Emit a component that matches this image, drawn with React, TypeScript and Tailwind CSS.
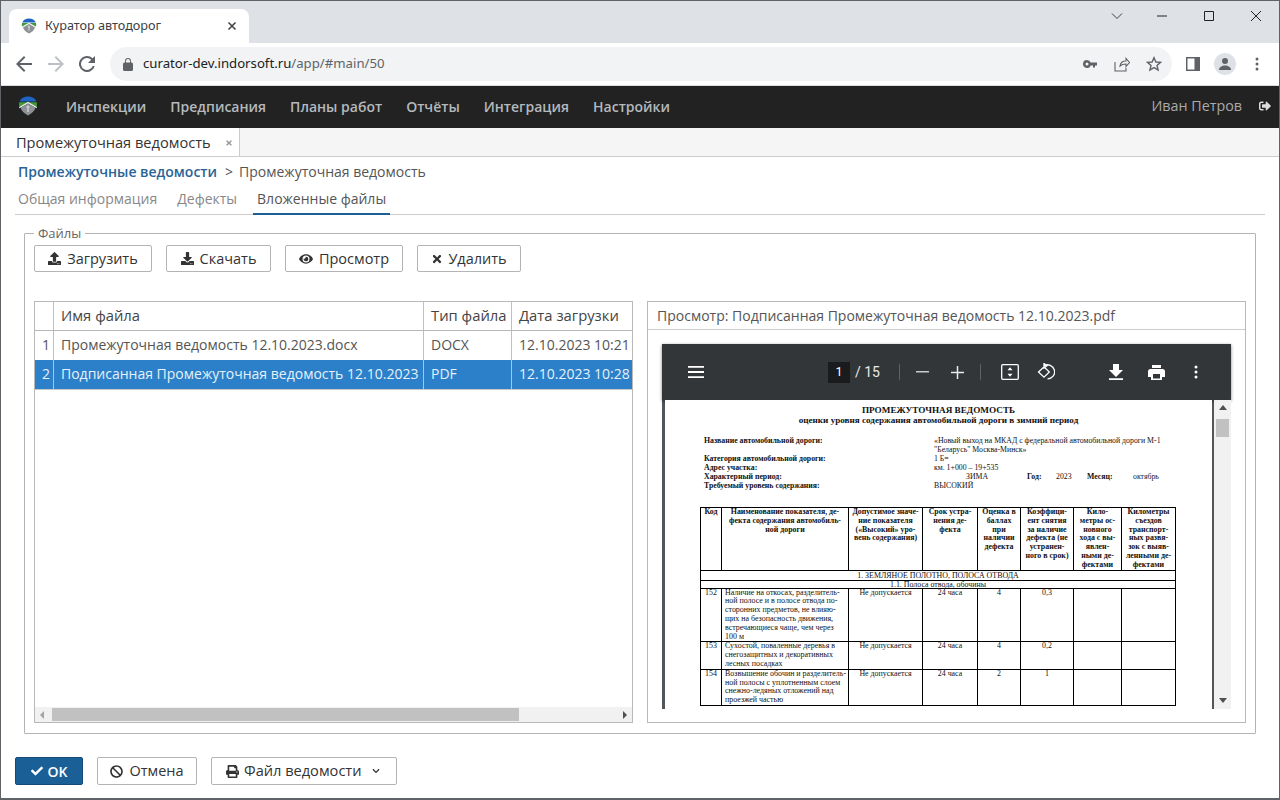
import { FaBan, FaCheck, FaChevronDown, FaDownload, FaEye, FaPrint, FaSignOutAlt, FaTimes, FaUpload } from "react-icons/fa";

function Logo({ size = 20 }: { size?: number }) {
  return (
    <svg width={size} height={size} viewBox="0 0 20 20">
      <path d="M1.500 5.500C3 2 6 .5 10 .5s7 1.500 8.500 5z" fill="#1f63c4" />
      <path d="M1.200 6.300h17.600c.4 1.500.3 3-.2 4.500L10 6.300 1.400 10.800c-.5-1.500-.6-3-.2-4.500z" fill="#3f9a35" />
      <path d="M10 5.800l9 5.200-.5 1.200L10 7.500 1.500 12.200 1 11z" fill="#e8efe8" />
      <path d="M10 7.500l7.500 4.300c-1 3-3.500 5.700-7.500 7.700-4-2-6.500-4.700-7.500-7.700z" fill="#8c9295" />
      <path d="M10 9.500a1.500 1.500 0 0 1 .8 2.800V16H9.200v-3.700a1.500 1.500 0 0 1 .8-2.800z" fill="#c9cccd" />
    </svg>
  );
}

function ToolButton({ icon, label, className }: { icon: React.ReactNode; label: string; className: string }) {
  return (
    <button className={`flex h-[27px] items-center justify-center gap-[6px] rounded-[2px] border border-[#b4b4b4] bg-white text-[14.500px] text-[#333] ${className}`}>
      {icon}
      <span>{label}</span>
    </button>
  );
}

function BrowserChrome() {
  return (
    <>
      <div className="flex h-[42px] shrink-0 items-end bg-[#dee1e6] pl-[8px]">
        <div className="flex h-[34px] w-[240px] items-center rounded-t-[8px] bg-white pl-[12px] pr-[12px] font-['Noto_Sans']">
          <Logo size={16} />
          <span className="ml-[8px] flex-1 pb-[2px] text-[12.650px] text-[#3c4043]">Куратор автодорог</span>
          <svg width="10" height="10" viewBox="0 0 10 10" stroke="#3c4043" strokeWidth="1.500"><path d="M1.500 1.500l7 7M8.500 1.500l-7 7" /></svg>
        </div>
        <div className="flex-1" />
        <div className="flex h-[29px] items-center self-start">
          <svg className="mr-[34px]" width="12" height="8" viewBox="0 0 12 8" fill="none" stroke="#3c4043"><path d="M1 1.500l5 5 5-5" /></svg>
          <svg className="mr-[37px]" width="10" height="2" viewBox="0 0 10 2" stroke="#222"><path d="M0 1h10" /></svg>
          <svg className="mr-[37px]" width="10" height="10" viewBox="0 0 10 10" fill="none" stroke="#222"><path d="M.5.500h9v9h-9z" /></svg>
          <svg className="mr-[18px]" width="10" height="10" viewBox="0 0 10 10" stroke="#222"><path d="M0 0l10 10M10 0L0 10" /></svg>
        </div>
      </div>
      <div className="flex h-[43px] shrink-0 items-center border-b border-[#dadce0] bg-white">
        <svg className="ml-[15px]" width="16" height="16" viewBox="0 0 16 16" fill="#5f6368"><path d="M16 7H3.800l5.600-5.600L8 0 0 8l8 8 1.400-1.400L3.800 9H16z" /></svg>
        <svg className="ml-[16px]" width="16" height="16" viewBox="0 0 16 16" fill="#bdc1c6"><path d="M0 7h12.200L6.600 1.400 8 0l8 8-8 8-1.400-1.400L12.200 9H0z" /></svg>
        <svg className="ml-[15px]" width="16" height="16" viewBox="0 0 16 16" fill="#5f6368"><path d="M13.650 2.350A8 8 0 1 0 15.740 10h-2.080a6 6 0 1 1-1.420-6.240L9 7h7V0z" /></svg>
        <div className="ml-[15px] flex h-[34px] w-[1062px] items-center rounded-full bg-[#f1f3f4] pl-[13px] pr-[10px] font-['Noto_Sans']">
          <svg width="10" height="13" viewBox="0 0 10 13" fill="#5f6368"><path d="M8.500 4.500H8V3a3 3 0 0 0-6 0v1.500h-.5A1.500 1.500 0 0 0 0 6v5.500A1.500 1.500 0 0 0 1.500 13h7a1.500 1.500 0 0 0 1.500-1.500V6a1.500 1.500 0 0 0-1.500-1.500zM3 3a2 2 0 0 1 4 0v1.500H3z" /></svg>
          <span className="ml-[10px] flex-1 text-[13.200px] text-[#202124]">curator-dev.indorsoft.ru<span className="text-[#5f6368]">/app/#main/50</span></span>
          <svg width="14" height="8" viewBox="0 0 14 8" fill="#5f6368"><path d="M4 0a4 4 0 1 0 3.700 5.500H10V7.500h2V5.500h2V2.500H7.700A4 4 0 0 0 4 0zm0 2.500a1.500 1.500 0 1 1 0 3 1.500 1.500 0 0 1 0-3z" /></svg>
          <svg className="ml-[17px]" width="16" height="16" viewBox="0 0 16 16" fill="none" stroke="#5f6368" strokeWidth="1.100"><path d="M1 6v9h11v-3M6 10c.5-3.500 3-5 6-5V2.500l3.500 4-3.500 4V8c-2.500 0-4.500.5-6 2z" /></svg>
          <svg className="ml-[16px]" width="16" height="16" viewBox="0 0 16 16" fill="none" stroke="#5f6368" strokeWidth="1.400"><path d="M8 1.700l1.900 4.300 4.600.4-3.500 3 1.100 4.600L8 11.600 3.900 14l1.100-4.600-3.500-3 4.600-.4z" /></svg>
        </div>
        <svg className="ml-[14px]" width="14" height="14" viewBox="0 0 14 14"><path d="M0 0h14v14H0z" fill="#5f6368" /><path d="M1.500 1.500h7v11h-7z" fill="#fff" /></svg>
        <div className="ml-[14px] flex h-[22px] w-[22px] items-center justify-center rounded-full bg-[#dee1e6]">
          <svg width="14" height="14" viewBox="0 0 14 14" fill="#5f6368"><circle cx="7" cy="4" r="3" /><path d="M1 13c0-3 3-4.500 6-4.500s6 1.500 6 4.500z" /></svg>
        </div>
        <svg className="ml-[19px]" width="4" height="14" viewBox="0 0 4 14" fill="#5f6368"><circle cx="2" cy="2" r="1.500" /><circle cx="2" cy="7" r="1.500" /><circle cx="2" cy="12" r="1.500" /></svg>
      </div>
    </>
  );
}

function NavBar() {
  const items = ["Инспекции", "Предписания", "Планы работ", "Отчёты", "Интеграция", "Настройки"];
  return (
    <div className="flex h-[42px] shrink-0 items-center bg-[#222] pb-[2px] pl-[17px] pr-[8px]">
      <Logo size={20} />
      <nav className="ml-[28px] flex gap-[24px]">
        {items.map((it) => (
          <span key={it} className="text-[14px] font-semibold text-[#b4b9bd]">{it}</span>
        ))}
      </nav>
      <span className="ml-auto text-[14.300px] text-[#aaa]">Иван Петров</span>
      <FaSignOutAlt className="ml-[17px] text-[12px] text-[#ddd]" />
    </div>
  );
}

function FileGrid() {
  const cell = "flex h-full shrink-0 items-center overflow-hidden whitespace-nowrap border-r border-[#c0c0c0] px-[7px]";
  return (
    <div className="flex h-[422px] w-[599px] shrink-0 flex-col border border-[#b8b8b8] bg-white text-[14px]">
      <div className="flex h-[29px] shrink-0 border-b border-[#b8b8b8] text-[14.800px] text-[#444]">
        <div className={`${cell} w-[19px] pb-[2px]`} />
        <div className={`${cell} w-[370px] pb-[2px]`}>Имя файла</div>
        <div className={`${cell} w-[88px] pb-[2px]`}>Тип файла</div>
        <div className="flex items-center whitespace-nowrap px-[7px] pb-[2px]">Дата загрузки</div>
      </div>
      <div className="flex h-[29px] shrink-0 text-[#555]">
        <div className={`${cell} w-[19px] justify-end !px-[3px] pb-[3px]`}>1</div>
        <div className={`${cell} w-[370px] pb-[3px]`}>Промежуточная ведомость 12.10.2023.docx</div>
        <div className={`${cell} w-[88px] pb-[3px]`}>DOCX</div>
        <div className="flex items-center whitespace-nowrap px-[7px] pb-[3px]">12.10.2023 10:21</div>
      </div>
      <div className="flex h-[29px] shrink-0 bg-[#2b80c9] text-[#e6f0f8]">
        <div className={`${cell} w-[19px] justify-end border-[#1f6aa8] !px-[3px] pb-[2px]`}>2</div>
        <div className={`${cell} w-[370px] border-[#1f6aa8] pb-[2px]`}>Подписанная Промежуточная ведомость 12.10.2023</div>
        <div className={`${cell} w-[88px] border-[#1f6aa8] pb-[2px]`}>PDF</div>
        <div className="flex items-center whitespace-nowrap px-[7px] pb-[2px]">12.10.2023 10:28</div>
      </div>
      <div className="h-px shrink-0 bg-[#c8c8c8]" />
      <div className="flex-1" />
      <div className="flex h-[15px] shrink-0 items-center bg-[#f1f1f1] px-[5px]">
        <svg width="4" height="8" viewBox="0 0 4 8" fill="#a3a3a3"><path d="M4 0v8L0 4z" /></svg>
        <div className="ml-[8px] h-[13px] w-[467px] bg-[#c1c1c1]" />
        <div className="flex-1" />
        <svg width="4" height="8" viewBox="0 0 4 8" fill="#505050"><path d="M0 0v8l4-4z" /></svg>
      </div>
    </div>
  );
}

function PdfToolbar() {
  return (
    <div className="flex h-[56px] shrink-0 items-center bg-[#323639] text-white shadow-[0_1px_3px_rgba(0,0,0,0.5)]">
      <svg className="ml-[26px]" width="16" height="12" viewBox="0 0 16 12" fill="#fff"><path d="M0 0h16v1.800H0zM0 5.100h16v1.800H0zM0 10.200h16V12H0z" /></svg>
      <div className="ml-[124px] flex h-[21px] w-[22px] items-center justify-center bg-[#191b1c] font-['Roboto'] text-[12.500px]">1</div>
      <span className="ml-[5px] font-['Roboto'] text-[14px] text-[#e8eaed]">/ 15</span>
      <div className="ml-[19px] h-[16px] w-px bg-[#5f6368]" />
      <svg className="ml-[16px]" width="13" height="2" viewBox="0 0 13 2" fill="#c8cacc"><path d="M0 0h13v1.500H0z" /></svg>
      <svg className="ml-[22px]" width="13" height="13" viewBox="0 0 13 13" fill="#e8eaed"><path d="M5.750 0h1.500v5.750H13v1.500H7.250V13h-1.500V7.250H0v-1.500h5.750z" /></svg>
      <div className="ml-[16px] h-[16px] w-px bg-[#5f6368]" />
      <svg className="ml-[20px]" width="18" height="16" viewBox="0 0 18 16" fill="none" stroke="#fff" strokeWidth="1.300"><rect x=".7" y=".7" width="16.600" height="14.600" rx="1" /><path d="M9 3.200L6.500 6.300h5zM9 12.800L6.500 9.700h5z" fill="#fff" stroke="none" /></svg>
      <svg className="ml-[18px]" width="18" height="18" viewBox="0 0 18 18" fill="none" stroke="#fff" strokeWidth="1.300"><path d="M7 2.800a7 7 0 1 1 3.500 13" /><path d="M7 .5v4.500l3-2.300zM1.500 9L7 3.800 12.300 9 7 14.200z" /></svg>
      <svg className="ml-[54px]" width="14" height="16" viewBox="0 0 14 16" fill="#fff"><path d="M4 0h6v6h4l-7 7-7-7h4zM0 14.200h14V16H0z" /></svg>
      <svg className="ml-[25px]" width="17" height="15" viewBox="0 0 17 15" fill="#fff"><path d="M4 0h9v3H4zM2.500 4h12A2.500 2.500 0 0 1 17 6.500V12h-3v3H3v-3H0V6.500A2.500 2.500 0 0 1 2.500 4zM5 9v4.500h7V9z" /></svg>
      <svg className="ml-[29px]" width="4" height="14" viewBox="0 0 4 14" fill="#fff"><circle cx="2" cy="2" r="1.500" /><circle cx="2" cy="7" r="1.500" /><circle cx="2" cy="12" r="1.500" /></svg>
    </div>
  );
}

function PdfPage() {
  const th = "border border-black px-[1px] text-center align-top text-[7.900px] font-bold";
  const td = "border border-black px-[1px] text-center align-top text-[7.900px]";
  const rows = [
    { code: "152", name: ["Наличие на откосах, разделитель-", "ной полосе и в полосе отвода по-", "сторонних предметов, не влияю-", "щих на безопасность движения,", "встречающиеся чаще, чем через", "100 м"], score: "4", k: "0,3" },
    { code: "153", name: ["Сухостой, поваленные деревья в", "снегозащитных и декоративных", "лесных посадках"], score: "4", k: "0,2" },
    { code: "154", name: ["Возвышение обочин и разделитель-", "ной полосы с уплотненным слоем", "снежно-ледяных отложений над", "проезжей частью"], score: "2", k: "1" },
  ];
  return (
    <div className="flex h-[309px] flex-1 flex-col overflow-hidden bg-white pt-[5px] font-['Liberation_Serif'] text-[7.800px] leading-[9px] text-[#111]">
      <div className="text-center text-[9.200px] font-bold leading-[10px]">ПРОМЕЖУТОЧНАЯ ВЕДОМОСТЬ</div>
      <div className="text-center text-[9.150px] font-bold leading-[10px]">оценки уровня содержания автомобильной дороги в зимний период</div>
      <div className="ml-[39px] mt-[11px] flex">
        <div className="w-[230px] font-bold">
          <div className="h-[18px]">Название автомобильной дороги:</div>
          <div>Категория автомобильной дороги:</div>
          <div>Адрес участка:</div>
          <div>Характерный период:</div>
          <div>Требуемый уровень содержания:</div>
        </div>
        <div className="w-[250px] whitespace-nowrap">
          <div>«Новый выход на МКАД с федеральной автомобильной дороги М-1</div>
          <div>"Беларусь" Москва-Минск»</div>
          <div>1 Б=</div>
          <div>км. 1+000 – 19+535</div>
          <div className="flex">
            <span className="ml-[32px] w-[61px]">ЗИМА</span>
            <b className="w-[29px]">Год:</b>
            <span className="w-[31px]">2023</span>
            <b className="w-[46px]">Месяц:</b>
            <span className="text-[#223]">октябрь</span>
          </div>
          <div>ВЫСОКИЙ</div>
        </div>
      </div>
      <table className="ml-[35px] mt-[17px] w-[475px] shrink-0 table-fixed border-collapse border border-black leading-[8.800px]">
        <colgroup>
          <col className="w-[21px]" />
          <col className="w-[127px]" />
          <col className="w-[74px]" />
          <col className="w-[55px]" />
          <col className="w-[43px]" />
          <col className="w-[53px]" />
          <col className="w-[48px]" />
          <col className="w-[54px]" />
        </colgroup>
        <tbody>
          <tr>
            <td className={th}>Код</td>
            <td className={th}>Наименование показателя, де-<br />фекта содержания автомобиль-<br />ной дороги</td>
            <td className={th}>Допустимое значе-<br />ние показателя<br />(«Высокий» уро-<br />вень содержания)</td>
            <td className={th}>Срок устра-<br />нения де-<br />фекта</td>
            <td className={th}>Оценка в<br />баллах<br />при<br />наличии<br />дефекта</td>
            <td className={th}>Коэффици-<br />ент снятия<br />за наличие<br />дефекта (не<br />устранен-<br />ного в срок)</td>
            <td className={th}>Кило-<br />метры ос-<br />новного<br />хода с вы-<br />явлен-<br />ными де-<br />фектами</td>
            <td className={th}>Километры<br />съездов<br />транспорт-<br />ных развя-<br />зок с выяв-<br />ленными де-<br />фектами</td>
          </tr>
          <tr><td colSpan={8} className={`${td} leading-[9px]`}>1. ЗЕМЛЯНОЕ ПОЛОТНО, ПОЛОСА ОТВОДА</td></tr>
          <tr><td colSpan={8} className={`${td} leading-[7px]`}>1.1. Полоса отвода, обочины</td></tr>
          {rows.map((r) => (
            <tr key={r.code}>
              <td className={td}>{r.code}</td>
              <td className="border border-black px-[3px] align-top text-[7.950px]">{r.name.map((l) => <div key={l} className="whitespace-nowrap">{l}</div>)}</td>
              <td className={td}>Не допускается</td>
              <td className={td}>24 часа</td>
              <td className={td}>{r.score}</td>
              <td className={td}>{r.k}</td>
              <td className={td} />
              <td className={td} />
            </tr>
          ))}
        </tbody>
      </table>
    </div>
  );
}

function PdfViewer() {
  return (
    <div className="flex h-[422px] w-[599px] shrink-0 flex-col border border-[#b8b8b8] bg-white">
      <div className="flex h-[28px] shrink-0 items-center border-b border-[#ccc] pl-[9px] text-[14px] text-[#555]">
        Просмотр: Подписанная Промежуточная ведомость 12.10.2023.pdf
      </div>
      <div className="flex-1 px-[14px] pt-[14px]">
        <div className="flex h-[365px] w-[569px] flex-col bg-[#525659]">
          <PdfToolbar />
          <div className="flex min-h-0 flex-1 pl-[3px]">
            <PdfPage />
            <div className="ml-[2px] flex w-[17px] flex-col items-center bg-[#f1f1f1]">
              <svg className="mt-[5px]" width="8" height="5" viewBox="0 0 8 5" fill="#505050"><path d="M4 0l4 5H0z" /></svg>
              <div className="mt-[9px] h-[18px] w-[13px] bg-[#c1c1c1]" />
              <svg className="mb-[6px] mt-auto" width="8" height="5" viewBox="0 0 8 5" fill="#505050"><path d="M4 5l4-5H0z" /></svg>
            </div>
          </div>
        </div>
      </div>
    </div>
  );
}

export default function App() {
  return (
    <div className="flex h-[800px] w-[1280px] flex-col overflow-hidden border border-b-2 border-[#5f6368] bg-white font-['Open_Sans',sans-serif]">
      <BrowserChrome />
      <NavBar />
      <div className="flex h-[29px] shrink-0 border-b border-[#ccc] bg-[#f5f5f5]">
        <div className="flex w-[239px] items-center border-r border-[#ccc] bg-white pl-[15px] pt-[2px] text-[14.600px] text-[#333]">
          <span>Промежуточная ведомость</span>
          <FaTimes className="ml-[14px] text-[8px] text-[#999]" />
        </div>
      </div>
      <div className="flex min-h-0 flex-1 flex-col px-[14px]">
        <div className="ml-[3px] mt-[5px] flex items-center text-[14px] leading-[20px]">
          <span className="font-semibold text-[#2a6496]">Промежуточные ведомости</span>
          <span className="ml-[8px] text-[#555]">{">"}</span>
          <span className="ml-[6px] text-[#555]">Промежуточная ведомость</span>
        </div>
        <div className="mt-[6px] flex h-[27px] items-start gap-[20px] border-b border-[#ccc] pl-[3px] text-[14px] text-[#888]">
          <span>Общая информация</span>
          <span>Дефекты</span>
          <span className="-mx-[4px] h-[27px] border-b-2 border-[#1a5f96] px-[4px] text-[#555]">Вложенные файлы</span>
        </div>
        <fieldset className="ml-[9px] mt-[11px] h-[508px] w-[1232px] rounded-[1px] border border-[#b4b4b4] px-[9px]">
          <legend className="px-[4px] text-[13px] leading-[14px] text-[#666]">Файлы</legend>
          <div className="mt-[5px] flex gap-[14px]">
            <ToolButton className="w-[118px]" icon={<FaUpload className="text-[13px]" />} label="Загрузить" />
            <ToolButton className="w-[105px]" icon={<FaDownload className="text-[13px]" />} label="Скачать" />
            <ToolButton className="w-[118px]" icon={<FaEye className="text-[14px]" />} label="Просмотр" />
            <ToolButton className="w-[104px] !gap-[5px]" icon={<FaTimes className="text-[12px]" />} label="Удалить" />
          </div>
          <div className="mt-[29px] flex gap-[14px]">
            <FileGrid />
            <PdfViewer />
          </div>
        </fieldset>
        <div className="mt-[23px] flex">
          <button className="flex h-[28px] w-[68px] items-center justify-center gap-[5px] rounded-[2px] border border-[#134a78] bg-[#1a5f96] text-[14px] font-semibold text-white">
            <FaCheck className="text-[12px]" /> OK
          </button>
          <ToolButton className="ml-[14px] !h-[28px] w-[100px]" icon={<FaBan className="text-[13px]" />} label="Отмена" />
          <button className="ml-[14px] flex h-[28px] w-[186px] items-center gap-[5px] rounded-[2px] border border-[#b4b4b4] bg-white pl-[14px] text-[14.600px] text-[#333]">
            <FaPrint className="text-[13px]" /> Файл ведомости <FaChevronDown className="ml-[5px] text-[8px]" />
          </button>
        </div>
      </div>
    </div>
  );
}
